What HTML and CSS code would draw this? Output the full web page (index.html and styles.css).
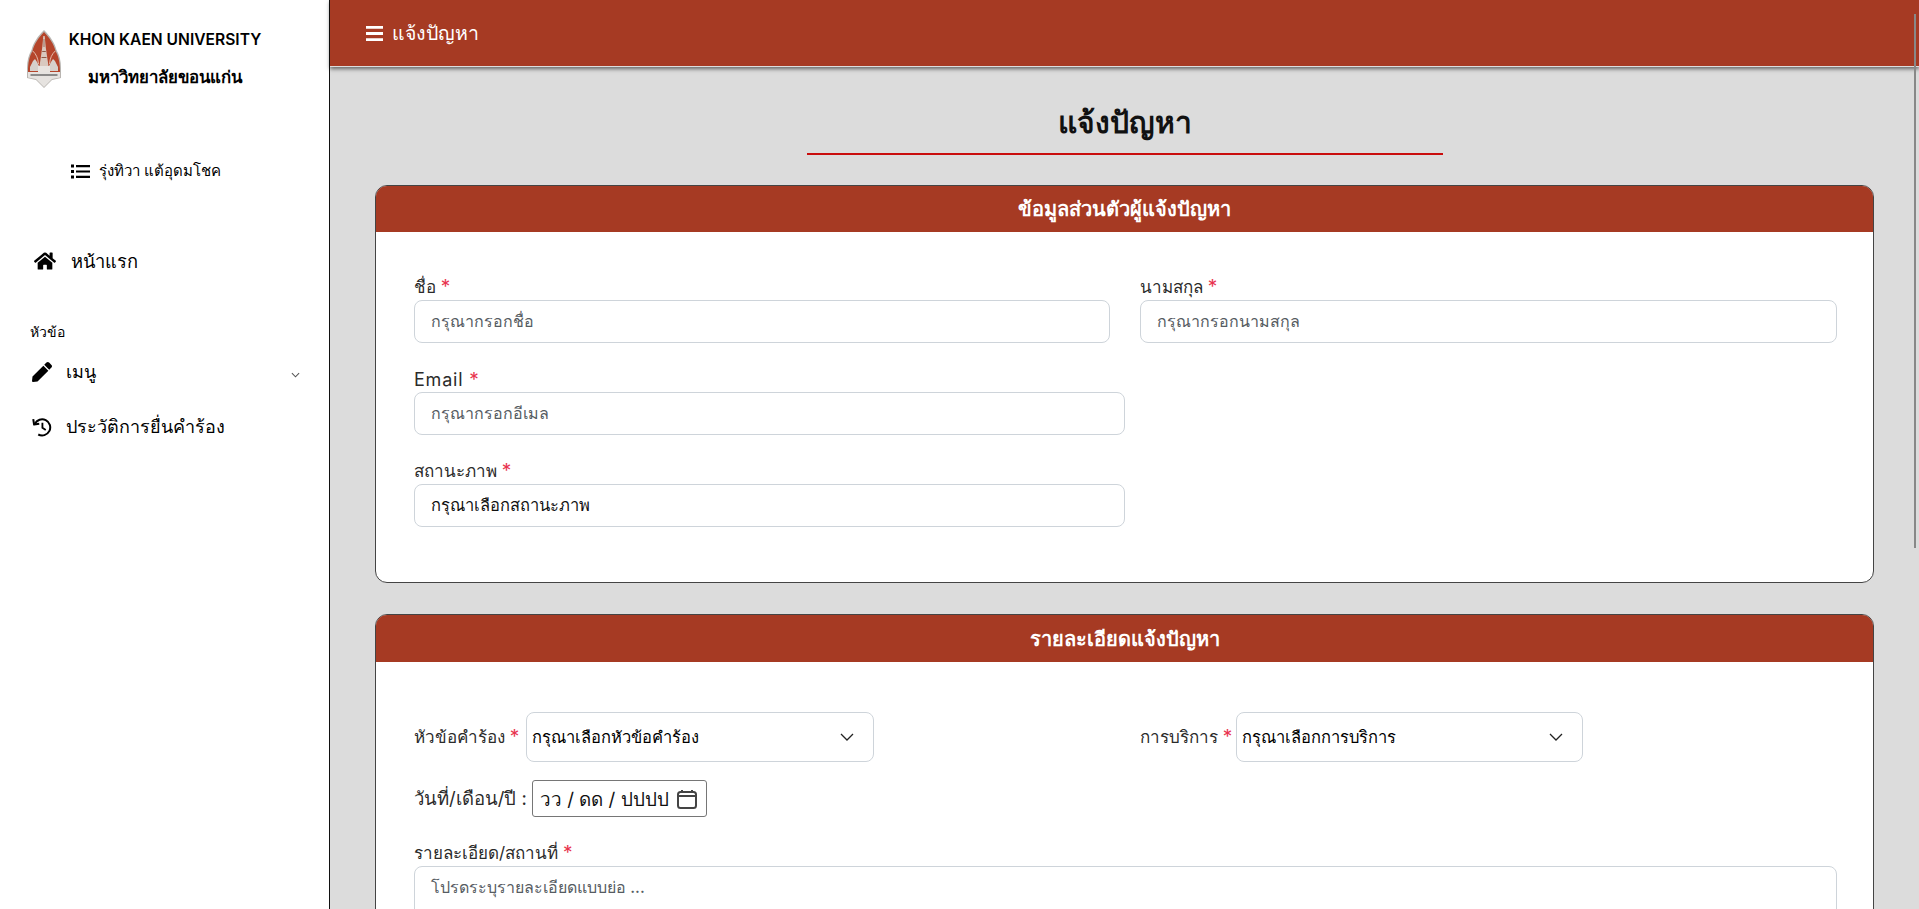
FILE: index.html
```html
<!DOCTYPE html>
<html lang="th">
<head>
<meta charset="utf-8">
<title>แจ้งปัญหา</title>
<link rel="stylesheet" href="styles.css">
</head>
<body>
<div class="app">
  <aside class="sidebar">
    <div class="brand">
      <svg class="logo" viewBox="0 0 34 58" aria-hidden="true">
        <path d="M17 0 C23 6 28 13 29.500 20 C32.500 25 34 31 34 38 L34 48 L25 50 L17 58 L9 50 L0 48 L0 38 C0 31 1.500 25 4.500 20 C6 13 11 6 17 0 Z" fill="#b9b5b1"/>
        <path d="M17 2 C22.500 8 27 14 28.500 21 C31.500 26 33 32 33 42 L1 42 C1 32 2.500 26 5.500 21 C7 14 11.500 8 17 2 Z" fill="#b5452b"/>
        <path d="M5.800 21 C9 24 11 28 11.500 34 M28.200 21 C25 24 23 28 22.500 34" fill="none" stroke="#e9c8b8" stroke-width=".9"/>
        <path d="M16.300 6 h1.400 l1 11 l1.300 9 l1.500 10 h-9 l1.500-10 l1.300-9 Z" fill="#d9c9bf"/>
        <path d="M16.600 9h.8v8h-.8zM15.200 21h3.600v1h-3.600zM14.500 27h5v1h-5z" fill="#8e5b48"/>
        <path d="M3 41 L3 37 L6 31 L8 29 L10 32 L12 36 L12 41 Z M31 41 L31 37 L28 31 L26 29 L24 32 L22 36 L22 41 Z" fill="#d6d1cc"/>
        <path d="M11 36h12v6H11z" fill="#e8e4e0"/>
        <path d="M1 42 H33 V47.500 L25 49 L17 57 L9 49 L1 47.500 Z" fill="#e6e3e0"/>
        <path d="M3.500 45 H30.500" stroke="#5a5a5a" stroke-width="1.300"/>
      </svg>
      <div class="brand-text">
        <div class="brand-en">KHON KAEN UNIVERSITY</div>
        <div class="brand-th">มหาวิทยาลัยขอนแก่น</div>
      </div>
    </div>
    <div class="profile">
      <svg class="icon-list" viewBox="0 0 19 15" aria-hidden="true">
        <path d="M0 0.500h3v3H0zM0 6h3v3H0zM0 11.500h3v3H0zM5 1h14v2.200H5zM5 6.400h14v2.200H5zM5 11.800h14V14H5z" fill="#000"/>
      </svg>
      <span>รุ่งทิวา แต้อุดมโชค</span>
    </div>
    <nav class="nav">
      <a class="nav-home">
        <svg class="icon-home" viewBox="0 0 576 512" aria-hidden="true">
          <path fill="#000" d="M280.370 148.260L96 300.110V464a16 16 0 0 0 16 16l112.060-.29a16 16 0 0 0 15.920-16V368a16 16 0 0 1 16-16h64a16 16 0 0 1 16 16v95.640a16 16 0 0 0 16 16.050L464 480a16 16 0 0 0 16-16V300L295.670 148.260a12.190 12.190 0 0 0-15.300 0zM571.600 251.470L488 182.560V44.050a12 12 0 0 0-12-12h-56a12 12 0 0 0-12 12v72.610L318.470 43a48 48 0 0 0-61 0L4.340 251.470a12 12 0 0 0-1.600 16.900l25.500 31A12 12 0 0 0 45.150 301l235.220-193.740a12.190 12.190 0 0 1 15.300 0L530.900 301a12 12 0 0 0 16.900-1.600l25.500-31a12 12 0 0 0-1.700-16.930z"/>
        </svg>
        <span>หน้าแรก</span>
      </a>
      <div class="nav-heading">หัวข้อ</div>
      <a class="nav-item">
        <svg class="icon-nav" viewBox="0 0 512 512" aria-hidden="true">
          <path fill="#000" d="M290.740 93.240l128.020 128.020-277.990 277.990-114.140 12.600C11.350 513.540-1.560 500.620.14 485.340l12.700-114.220 277.900-277.880zm207.200-19.060l-60.110-60.110c-18.750-18.750-49.160-18.750-67.910 0l-56.550 56.550 128.020 128.020 56.550-56.550c18.750-18.760 18.750-49.160 0-67.910z"/>
        </svg>
        <span class="nav-label">เมนู</span>
        <svg class="icon-caret" viewBox="0 0 10 6" aria-hidden="true">
          <path d="M1 1l4 4 4-4" fill="none" stroke="#555" stroke-width="1.200"/>
        </svg>
      </a>
      <a class="nav-item">
        <svg class="icon-nav" viewBox="0 0 24 24" aria-hidden="true">
          <path d="M1.500 2.500l1 6.500 6.200-.9" fill="none" stroke="#000" stroke-width="2.400" stroke-linejoin="round"/>
          <path d="M3.400 8.300A9.700 9.700 0 1 1 7.500 21" fill="none" stroke="#000" stroke-width="2.400"/>
          <path d="M12.500 7v6l4 2.500" fill="none" stroke="#000" stroke-width="2.200"/>
        </svg>
        <span class="nav-label">ประวัติการยื่นคำร้อง</span>
      </a>
    </nav>
  </aside>

  <div class="main">
    <header class="topbar">
      <svg class="icon-menu" viewBox="0 0 17 15" aria-hidden="true">
        <path d="M0 0h17v2.800H0zM0 6.100h17v2.800H0zM0 12.200h17V15H0z" fill="#fff"/>
      </svg>
      <span>แจ้งปัญหา</span>
    </header>
    <div class="content">
      <div class="page-title">
        <h1>แจ้งปัญหา</h1>
      </div>

      <section class="card">
        <h2 class="card-head">ข้อมูลส่วนตัวผู้แจ้งปัญหา</h2>
        <div class="card-body card-body-a">
          <div class="two-col">
            <div class="field">
              <label class="label">ชื่อ <em>*</em></label>
              <input class="control" type="text" placeholder="กรุณากรอกชื่อ">
            </div>
            <div class="field">
              <label class="label">นามสกุล <em>*</em></label>
              <input class="control" type="text" placeholder="กรุณากรอกนามสกุล">
            </div>
          </div>
          <div class="field field-half">
            <label class="label label-latin">Email <em>*</em></label>
            <input class="control" type="text" placeholder="กรุณากรอกอีเมล">
          </div>
          <div class="field field-half">
            <label class="label">สถานะภาพ <em>*</em></label>
            <select class="control control-select">
              <option>กรุณาเลือกสถานะภาพ</option>
            </select>
          </div>
        </div>
      </section>

      <section class="card">
        <h2 class="card-head">รายละเอียดแจ้งปัญหา</h2>
        <div class="card-body card-body-b">
          <div class="two-col">
            <div class="inline-field">
              <label class="label-inline">หัวข้อคำร้อง <em>*</em></label>
              <div class="select-wrap select-topic">
                <select class="select">
                  <option>กรุณาเลือกหัวข้อคำร้อง</option>
                </select>
                <svg class="select-arrow" viewBox="0 0 14 8" aria-hidden="true"><path d="M1 1l6 6 6-6" fill="none" stroke="#222" stroke-width="1.300"/></svg>
              </div>
            </div>
            <div class="inline-field">
              <label class="label-inline">การบริการ <em>*</em></label>
              <div class="select-wrap select-service">
                <select class="select">
                  <option>กรุณาเลือกการบริการ</option>
                </select>
                <svg class="select-arrow" viewBox="0 0 14 8" aria-hidden="true"><path d="M1 1l6 6 6-6" fill="none" stroke="#222" stroke-width="1.300"/></svg>
              </div>
            </div>
          </div>
          <div class="inline-field date-row">
            <label class="label-inline label-date">วันที่/เดือน/ปี :</label>
            <div class="date">
              <span>วว / ดด / ปปปป</span>
              <svg class="icon-cal" viewBox="0 0 20 20" aria-hidden="true">
                <path d="M5 1v3M15 1v3" stroke="#444" stroke-width="2"/>
                <rect x="1" y="3" width="18" height="16" rx="2.500" fill="none" stroke="#444" stroke-width="2"/>
                <path d="M1 7h18" stroke="#444" stroke-width="2"/>
              </svg>
            </div>
          </div>
          <div class="field field-detail">
            <label class="label">รายละเอียด/สถานที่ <em>*</em></label>
            <textarea class="control control-area" placeholder="โปรดระบุรายละเอียดแบบย่อ ..."></textarea>
          </div>
        </div>
      </section>
    </div>
    <div class="scroll-thumb"></div>
  </div>
</div>
</body>
</html>
```
FILE: styles.css
```css
* { box-sizing: border-box; }
html, body { margin: 0; height: 100%; overflow: hidden; }
body {
  font-family: "Inter", "Noto Sans", sans-serif;
  color: #111;
  background: #dcdcdc;
}
.app { display: flex; height: 909px; overflow: hidden; }

/* sidebar */
.sidebar {
  width: 330px;
  flex: none;
  background: #fff;
  border-right: 1px solid #111;
  color: #000;
}
.brand { display: flex; padding: 30px 0 0 27px; gap: 7px; }
.logo { width: 34px; height: 58px; flex: none; }
.brand-text { width: 194px; text-align: center; }
.brand-en { font-size: 15.6px; font-weight: 600; line-height: 20px; white-space: nowrap; }
.brand-th { font-size: 16.8px; font-weight: 700; line-height: 20px; margin-top: 17px; }
.profile {
  display: flex;
  align-items: center;
  gap: 9px;
  margin: 73px 0 0 71px;
  font-size: 15px;
  line-height: 20px;
}
.icon-list { width: 19px; height: 15px; flex: none; }
.nav { margin-top: 68px; }
.nav a { display: flex; align-items: center; color: #000; }
.nav-home { padding-left: 34px; gap: 15px; font-size: 18.3px; font-weight: 500; line-height: 24px; }
.icon-home { width: 22px; height: 20px; flex: none; }
.nav-heading { font-size: 14px; line-height: 18px; margin: 50px 0 0 30px; }
.nav-item { padding: 0 29px 0 32px; gap: 14px; font-size: 18px; font-weight: 500; line-height: 24px; margin-top: 31px; }
.nav-heading + .nav-item { margin-top: 19px; }
.icon-nav { width: 20px; height: 20px; flex: none; }
.nav-label { flex: none; }
.icon-caret { width: 9px; height: 6px; margin: 6px 0 0 auto; flex: none; }

/* main */
.main { flex: 1; min-width: 0; position: relative; display: flex; flex-direction: column; }
.topbar {
  height: 67px;
  flex: none;
  display: flex;
  align-items: center;
  gap: 9px;
  padding-left: 36px;
  background: #a63a23;
  color: #fff;
  font-size: 19.5px;
  font-weight: 500;
  border-bottom: 1px solid #ddd;
  box-shadow: 0 2px 4px rgba(0, 0, 0, .55);
}
.icon-menu { width: 17px; height: 15px; flex: none; }
.content { padding: 0 45px; }
.page-title {
  width: 636px;
  margin: 33px auto 30px;
  padding-bottom: 9px;
  border-bottom: 2px solid #c90d0d;
  text-align: center;
}
.page-title h1 { margin: 0; font-size: 30px; font-weight: 700; line-height: 44px; color: #111; }

.card {
  border: 1px solid #444;
  border-radius: 12px;
  background: #fff;
  overflow: hidden;
  margin-bottom: 31px;
}
.card-head {
  margin: 0;
  height: 46px;
  display: flex;
  align-items: center;
  justify-content: center;
  background: #a63a23;
  color: #fff;
  font-size: 20px;
  font-weight: 600;
}
.card + .card .card-head { height: 47px; }
.card-body { padding-left: 38px; padding-right: 36px; }
.card-body-a { padding-top: 43px; padding-bottom: 55px; }
.card-body-b { padding-top: 50px; padding-bottom: 60px; }
.two-col { display: grid; grid-template-columns: 696px 697px; gap: 30px; }
.field { display: block; }
.field-half { width: 711px; margin-top: 24px; }
.field-detail { margin-top: 24px; }
.label { display: block; font-size: 17px; line-height: 25px; color: #2b2b2b; }
.label-latin { font-size: 18px; letter-spacing: .8px; }
em { font-style: normal; color: #e8344e; font-size: 19px; line-height: 1; }
.control {
  display: block;
  width: 100%;
  height: 43px;
  padding: 0 16px 2px;
  border: 1px solid #ced4da;
  border-radius: 8px;
  background: #fff;
  font-family: inherit;
  font-size: 16px;
  font-weight: 500;
  color: #212529;
  outline: 0;
}
.control::placeholder { color: #565c62; opacity: 1; }
.control-select { appearance: none; color: #111; font-size: 16.5px; }
.control-area { height: 150px; padding-top: 8px; resize: none; }

.inline-field { display: flex; align-items: center; gap: 4px; }
.label-inline { font-size: 17px; color: #2b2b2b; white-space: nowrap; line-height: 25px; }
.label-date { font-size: 18.5px; }
.select-wrap { position: relative; height: 50px; }
.select-topic { width: 348px; margin-left: 3px; }
.select-service { width: 347px; }
.select {
  width: 100%;
  height: 100%;
  padding: 0 30px 0 5px;
  appearance: none;
  border: 1px solid #ced4da;
  border-radius: 8px;
  background: #fff;
  font-family: inherit;
  font-size: 16.5px;
  font-weight: 500;
  color: #000;
  outline: 0;
}
.select-arrow { position: absolute; right: 20px; top: 21px; width: 14px; height: 8px; pointer-events: none; }
.date-row { margin-top: 18px; }
.date {
  width: 175px;
  height: 37px;
  margin-left: 1px;
  display: flex;
  align-items: center;
  justify-content: space-between;
  padding: 0 9px 0 7px;
  border: 1px solid #767676;
  border-radius: 3px;
  font-size: 18.8px;
  color: #111;
  white-space: nowrap;
}
.icon-cal { width: 20px; height: 20px; flex: none; }

.scroll-thumb {
  position: absolute;
  left: 1584px;
  top: 14px;
  width: 2px;
  height: 534px;
  background: #888;
  z-index: 2;
}
```
